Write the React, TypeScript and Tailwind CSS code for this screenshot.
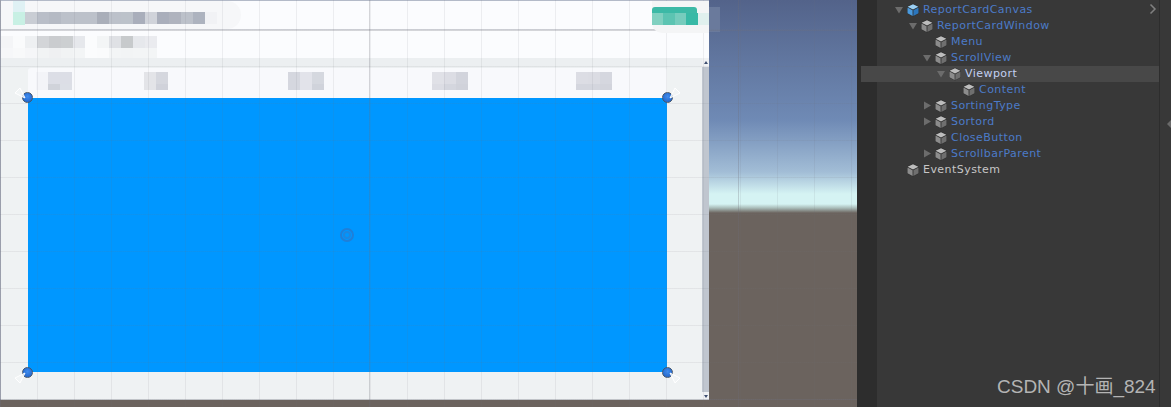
import React from 'react';

const rowOne = ['#c9cdd4', '#b9bec8', '#b5bac4', '#bcc1ca', '#bcc1ca', '#bcc1ca', '#a9aeb9', '#bcc1ca', '#bcc2ca', '#a9aebb', '#d0d3da', '#a9aebb', '#afb3be', '#bcc1ca', '#adb3bf', '#f1f2f5'];
const rowTwo = ['#f4f5f7', '#fafbfc', '#eef0f2', '#d3d5d8', '#cacccf', '#cccfd1', '#e6e8ec', '#fbfcfd', '#f3f5f6', '#dfe1e5', '#c7cacc', '#e6e8ec', '#eaebef'];
const rowThree = ['#f6f7f9', '#f8f9fa', '#f5f6f8', '#f1f3f4', '#eff0f2', '#f1f3f4', '#f3f5f6', '#fbfcfd', '#fafbfc', '#f3f5f6', '#f2f4f5', '#f3f5f6', '#f3f5f6'];
const tabs = [
  { margin: 'ml-[8px]', top: ['#f3f4f8', '#dcdee6', '#dcdee6'], bottom: ['#f3f4f8', '#d0d3da', '#dcdfe6'] },
  { margin: 'ml-[72px]', top: ['#e3e4e8', '#d5d7de'], bottom: ['#e3e4e8', '#d0d2da'] },
  { margin: 'ml-[120px]', top: ['#d5d7df', '#e2e3ea', '#d5d8df'], bottom: ['#d5d7df', '#e2e3ea', '#d0d3db'] },
  { margin: 'ml-[108px]', top: ['#e0e1e7', '#dcdde4', '#d2d4dc'], bottom: ['#dcdde4', '#d4d6de', '#d0d2da'] },
  { margin: 'ml-[108px]', top: ['#dcdde4', '#dbdce3', '#d5d7df'], bottom: ['#d4d6de', '#d4d6de', '#d2d4dc'] },
];

const tree = [
  { name: 'ReportCardCanvas', pad: 'pl-[32px]', arrow: 'down', root: true },
  { name: 'ReportCardWindow', pad: 'pl-[46px]', arrow: 'down' },
  { name: 'Menu', pad: 'pl-[60px]' },
  { name: 'ScrollView', pad: 'pl-[60px]', arrow: 'down' },
  { name: 'Viewport', pad: 'pl-[74px]', arrow: 'down', selected: true },
  { name: 'Content', pad: 'pl-[88px]' },
  { name: 'SortingType', pad: 'pl-[60px]', arrow: 'right' },
  { name: 'Sortord', pad: 'pl-[60px]', arrow: 'right' },
  { name: 'CloseButton', pad: 'pl-[60px]' },
  { name: 'ScrollbarParent', pad: 'pl-[60px]', arrow: 'right' },
  { name: 'EventSystem', pad: 'pl-[32px]', plain: true },
];

function Cells({ colors, height = 'h-3' }: { colors: string[]; height?: string }) {
  return (
    <div className="flex">
      {colors.map((color, i) => (
        <div key={i} className={`w-3 ${height}`} style={{ backgroundColor: color }} />
      ))}
    </div>
  );
}

function Cube({ root }: { root?: boolean }) {
  return (
    <svg width="14" height="14" viewBox="0 0 14 14" className="shrink-0 -ml-px">
      <polygon points="7,0.5 13,3.5 13,10.5 7,13.5 1,10.5 1,3.5" fill="#222222" fillOpacity="0.55" />
      <polygon points="7,1.2 12.4,3.8 7,6.5 1.6,3.8" fill={root ? '#9bd0f5' : '#bdbdbd'} />
      <polygon points="1.5,4.6 6.6,7.2 6.6,13 1.5,10.3" fill={root ? '#4a9ade' : '#8c8c8c'} />
      <polygon points="12.5,4.6 7.4,7.2 7.4,13 12.5,10.3" fill={root ? '#2b76bd' : '#6f6f6f'} />
    </svg>
  );
}

function Arrow({ dir }: { dir?: string }) {
  return (
    <svg width="14" height="14" viewBox="0 0 14 14" className="shrink-0">
      {dir === 'down' && <polygon points="2,4 10,4 6,10.5" fill="#6c6c6c" />}
      {dir === 'right' && <polygon points="3,2.5 10,6.5 3,10.5" fill="#6c6c6c" />}
    </svg>
  );
}

function Handle({ place, tip }: { place: string; tip: string }) {
  return (
    <div className={`absolute ${place} w-[11px] h-[11px] rounded-full bg-[radial-gradient(circle_at_50%_40%,#3f8df0,#1d5cc0)] border border-[#46566a]`}>
      <svg width="12" height="12" viewBox="0 0 12 12" className={`absolute ${tip}`}>
        <polygon points="1,11 11,6 6,1" fill="#f4f6f7" fillOpacity="0.7" stroke="#ffffff" strokeWidth="1" />
      </svg>
    </div>
  );
}

export default function App() {
  return (
    <div className="relative flex w-[1171px] h-[407px] overflow-hidden font-['DejaVu_Sans',sans-serif] bg-[#383838]">
      <div className="relative w-[857px] shrink-0 h-full bg-[linear-gradient(to_bottom,#53638a_0px,#6f8ab5_120px,#a2bdd6_172px,#d5f3f3_194px,#d5f3f3_204px,#a9bcb9_208px,#6b635e_213px,#6b635e_407px)]">
        <div className="w-[709px] h-[400px] flex flex-col bg-[#fbfcfe] border-t border-l border-[#b3bac8]">
          <div className="h-[29px] flex justify-between border-b border-[#d6d8de]">
            <div className="relative w-[240px] h-[28px] bg-[#f6f7f9] rounded-r-[30px]">
              <div className="absolute left-[12px] top-0 w-3 h-3 bg-[#dff1f4]" />
              <div className="absolute left-[12px] top-[11px] w-3 h-[13px] bg-[#c8f0e4]" />
              <div className="pl-[24px] pt-[11px]">
                <Cells colors={rowOne} />
              </div>
            </div>
            <div className="w-[57px] h-[32px] pt-[6px] bg-[#f4f5f6] rounded-bl-[10px] z-10">
              <div className="w-[45px] h-[6px] rounded-t-[3px] bg-[#3cb9a6]" />
              <Cells colors={['#80d0c0', '#5cc4b2', '#76ccbd', '#38b9a6', '#e0f0ee']} />
            </div>
          </div>
          <div className="h-[28px] pt-[6px] overflow-hidden">
            <Cells colors={rowTwo} />
            <Cells colors={rowThree} />
          </div>
          <div className="flex-1 flex min-h-0">
            <div className="flex-1 flex flex-col bg-[#eff2f3]">
              <div className="h-[10px] bg-[#eceff1]" />
              <div className="ml-[27px] mr-[35px] flex flex-col">
                <div className="h-[30px] bg-[#f8f9fc] rounded-t-[3px] pt-[4px] flex">
                  {tabs.map((tab, i) => (
                    <div key={i} className={tab.margin}>
                      <Cells colors={tab.top} />
                      <Cells colors={tab.bottom} height="h-[6px]" />
                    </div>
                  ))}
                </div>
                <div className="relative h-[274px] bg-[#0097ff]">
                  <Handle place="-top-[6px] -left-[6px]" tip="-top-[6px] -left-[9px] -rotate-90" />
                  <Handle place="-top-[6px] -right-[6px]" tip="-top-[6px] left-[6px]" />
                  <Handle place="-bottom-[6px] -left-[6px]" tip="top-[4px] -left-[9px] rotate-180" />
                  <Handle place="-bottom-[6px] -right-[6px]" tip="top-[4px] left-[6px] rotate-90" />
                  <div className="absolute left-[312px] top-[130px] w-[14px] h-[14px] rounded-full border-[2px] border-[#1f7fd8] flex items-center justify-center">
                    <div className="w-[8px] h-[8px] rounded-full border-[2px] border-[#1d87e0]" />
                  </div>
                </div>
              </div>
            </div>
            <div className="w-[7px] flex flex-col items-center bg-[#f0f2f4]">
              <div className="h-[9px] flex items-center">
                <div className="border-x-[2px] border-b-[3px] border-x-transparent border-b-[#3f4f70]" />
              </div>
              <div className="flex-1 w-full bg-[#c0c6cf]" />
              <div className="h-[8px] flex items-center">
                <div className="border-x-[2px] border-t-[3px] border-x-transparent border-t-[#3f4f70]" />
              </div>
            </div>
          </div>
        </div>
        <div className="absolute left-[708px] top-[7px] w-3 h-[25px] bg-[#6a7a9c]" />
        <div className="absolute inset-0 pointer-events-none bg-[linear-gradient(to_right,rgba(110,110,120,0.1)_1px,transparent_1px),linear-gradient(to_bottom,rgba(110,110,120,0.1)_1px,transparent_1px),linear-gradient(to_right,rgba(110,110,120,0.28)_1px,transparent_1px),linear-gradient(to_bottom,rgba(110,110,120,0.28)_1px,transparent_1px)] bg-[size:37px_37px,37px_37px,369px_369px,369px_369px] bg-[position:0_29px,0_29px,0_30px,0_30px]" />
      </div>

      <div className="w-[20px] shrink-0 bg-[#2d2d2d]" />

      <div className="w-[283px] shrink-0 pt-[2px] relative border-r border-[#2d2d2d]">
        {tree.map(row => (
          <div
            key={row.name}
            className={`h-4 flex items-center text-[11px] tracking-[0.45px] ${row.pad} -ml-[16px] ${row.selected ? 'bg-[#484848] text-[#c3d0f2]' : row.plain ? 'text-[#c6c6c6]' : 'text-[#4c7bc8]'}`}
          >
            <Arrow dir={row.arrow} />
            <span className="w-4 flex shrink-0"><Cube root={row.root} /></span>
            <span className="leading-4">{row.name}</span>
          </div>
        ))}
        <svg width="8" height="12" viewBox="0 0 8 12" className="absolute right-[2px] top-[3px]">
          <path d="M1.5 1.5 L6 6 L1.5 10.5" fill="none" stroke="#808080" strokeWidth="1.5" />
        </svg>
      </div>

      <div className="flex-1 relative">
        <div className="absolute right-0 top-[120px] border-y-[4px] border-r-[4px] border-y-transparent border-r-[#6a6a6a]" />
      </div>

      <div className="absolute left-[997px] top-[376px] text-[19px] leading-[22px] text-[#b4b4b4] font-['Liberation_Sans','Noto_Sans_CJK_SC',sans-serif]">
        CSDN @十画_824
      </div>
    </div>
  );
}
